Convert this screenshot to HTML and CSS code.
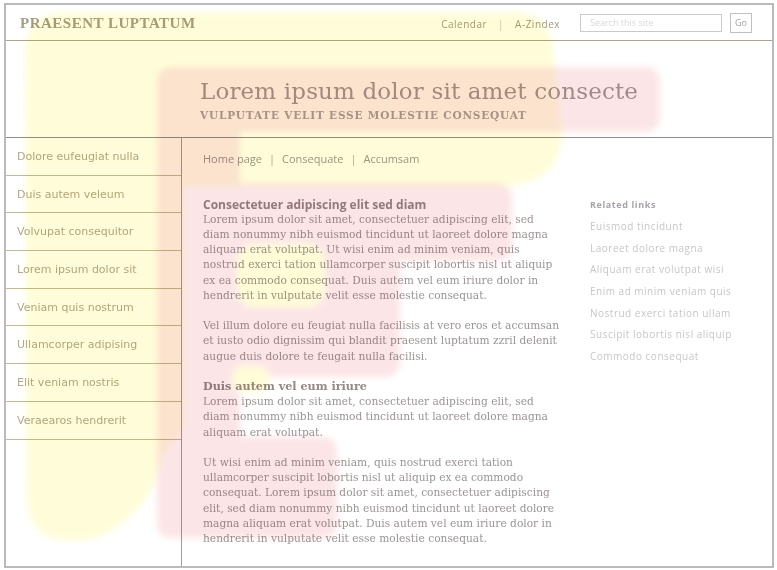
FILE: index.html
```html
<!DOCTYPE html>
<html lang="en">
<head>
<meta charset="utf-8">
<title>Praesent Luptatum</title>
<link rel="stylesheet" href="styles.css">
</head>
<body>
<div class="page">
  <header class="topbar">
    <div class="logo">PRAESENT LUPTATUM</div>
    <nav class="toplinks"><a class="toplink">Calendar</a><span class="sep">|</span><a class="toplink">A-Zindex</a></nav>
    <form class="search">
      <input class="search-input" type="text" placeholder="Search this site">
      <button class="go" type="button">Go</button>
    </form>
  </header>

  <section class="banner">
    <h1 class="title">Lorem ipsum dolor sit amet consecte</h1>
    <p class="subtitle">VULPUTATE VELIT ESSE MOLESTIE CONSEQUAT</p>
  </section>

  <div class="main">
    <ul class="sidenav">
      <li class="navitem">Dolore eufeugiat nulla</li>
      <li class="navitem">Duis autem veleum</li>
      <li class="navitem">Volvupat consequitor</li>
      <li class="navitem">Lorem ipsum dolor sit</li>
      <li class="navitem">Veniam quis nostrum</li>
      <li class="navitem">Ullamcorper adipising</li>
      <li class="navitem">Elit veniam nostris</li>
      <li class="navitem">Veraearos hendrerit</li>
    </ul>

    <div class="content">
      <div class="crumbs">Home page<span class="csep">|</span>Consequate<span class="csep">|</span>Accumsam</div>
      <div class="cols">
        <article class="article">
          <h2 class="art-head">Consectetuer adipiscing elit sed diam</h2>
          <p class="para">Lorem ipsum dolor sit amet, consectetuer adipiscing elit, sed<br>diam nonummy nibh euismod tincidunt ut laoreet dolore magna<br>aliquam erat volutpat. Ut wisi enim ad minim veniam, quis<br>nostrud exerci tation ullamcorper suscipit lobortis nisl ut aliquip<br>ex ea commodo consequat. Duis autem vel eum iriure dolor in<br>hendrerit in vulputate velit esse molestie consequat.</p>
          <p class="para">Vel illum dolore eu feugiat nulla facilisis at vero eros et accumsan<br>et iusto odio dignissim qui blandit praesent luptatum zzril delenit<br>augue duis dolore te feugait nulla facilisi.</p>
          <h3 class="art-sub">Duis autem vel eum iriure</h3>
          <p class="para">Lorem ipsum dolor sit amet, consectetuer adipiscing elit, sed<br>diam nonummy nibh euismod tincidunt ut laoreet dolore magna<br>aliquam erat volutpat.</p>
          <p class="para">Ut wisi enim ad minim veniam, quis nostrud exerci tation<br>ullamcorper suscipit lobortis nisl ut aliquip ex ea commodo<br>consequat. Lorem ipsum dolor sit amet, consectetuer adipiscing<br>elit, sed diam nonummy nibh euismod tincidunt ut laoreet dolore<br>magna aliquam erat volutpat. Duis autem vel eum iriure dolor in<br>hendrerit in vulputate velit esse molestie consequat.</p>
        </article>
        <aside class="related">
          <h4 class="rel-head">Related links</h4>
          <ul class="rel-list">
            <li class="rel-item">Euismod tincidunt</li>
            <li class="rel-item">Laoreet dolore magna</li>
            <li class="rel-item">Aliquam erat volutpat wisi</li>
            <li class="rel-item">Enim ad minim veniam quis</li>
            <li class="rel-item">Nostrud exerci tation ullam</li>
            <li class="rel-item">Suscipit lobortis nisl aliquip</li>
            <li class="rel-item">Commodo consequat</li>
          </ul>
        </aside>
      </div>
    </div>
  </div>
</div>

<svg class="heat" width="777" height="570" viewBox="0 0 777 570" aria-hidden="true">
  <defs>
    <filter id="soft" x="-10%" y="-10%" width="120%" height="120%">
      <feGaussianBlur stdDeviation="3"/>
    </filter>
  </defs>
  <g filter="url(#soft)">
    <path fill="#fffdd9" d="M25 55 Q25 12 68 12 L512 12 Q550 12 553 50 L562 132 Q562 186 498 186 L184 186 L184 420 C184 440 160 448 158 470 C155 500 112 540 82 540 L66 540 C36 540 27 520 26 490 Z"/>
    <g opacity="0.36" fill="#f6b8bc">
      <rect x="157" y="67" width="503" height="65" rx="14"/>
      <rect x="157" y="67" width="83" height="471" rx="14"/>
      <rect x="157" y="183" width="355" height="78" rx="14"/>
      <rect x="157" y="240" width="243" height="137" rx="14"/>
      <rect x="157" y="437" width="180" height="101" rx="14"/>
    </g>
    <rect fill="#fffcd8" x="237" y="244" width="88" height="63" rx="18"/>
    <rect fill="#fffcd8" x="233" y="366" width="36" height="26" rx="10"/>
  </g>
</svg>
</body>
</html>
```

FILE: styles.css
```css
* { box-sizing: border-box; }

html, body {
  margin: 0;
  padding: 0;
  background: #ffffff;
}

body {
  position: relative;
  width: 777px;
  height: 570px;
  overflow: hidden;
  font-family: "Open Sans", "DejaVu Sans", sans-serif;
}

.page {
  width: 770px;
  height: 565px;
  margin: 3px 0 0 4px;
  border: 2px solid #bababa;
  display: flex;
  flex-direction: column;
  background: #fff;
}

/* ---------- top bar ---------- */
.topbar {
  height: 36px;
  flex: none;
  border-bottom: 1px solid #aca58e;
  display: flex;
  align-items: center;
  padding: 0 20px 0 14px;
}

.logo {
  font-family: "Liberation Serif", serif;
  font-weight: bold;
  font-size: 15px;
  letter-spacing: 0.5px;
  color: #a59d87;
  margin-top: 1px;
}

.toplinks {
  margin-left: auto;
  display: flex;
  align-items: center;
  font-size: 10px;
  letter-spacing: 0.5px;
  color: #a09a82;
  margin-top: 2px;
}

.toplink { color: inherit; }

.sep {
  margin: 0 11px;
  color: #c4bfae;
}

.search {
  display: flex;
  align-items: center;
  margin: 0 0 0 20px;
}

.search-input {
  width: 142px;
  height: 18px;
  border: 1px solid #cacaca;
  padding: 0 0 0 9px;
  font-family: "Open Sans", sans-serif;
  font-size: 9px;
  color: #999;
  outline: none;
}

.search-input::placeholder { color: #d9d9d9; }

.go {
  width: 22px;
  height: 20px;
  margin-left: 8px;
  border: 1px solid #c0c0c0;
  background: #fff;
  padding: 0;
  font-family: "Open Sans", sans-serif;
  font-size: 9px;
  color: #a0a0a0;
}

/* ---------- banner ---------- */
.banner {
  height: 97px;
  flex: none;
  border-bottom: 1px solid #8f8f8f;
  padding: 36px 0 0 194px;
}

.title {
  margin: 0;
  font-family: "DejaVu Serif", serif;
  font-weight: normal;
  font-size: 23px;
  line-height: 28px;
  letter-spacing: 0.15px;
  color: #a49a9a;
  white-space: nowrap;
}

.subtitle {
  margin: 3px 0 0;
  font-family: "DejaVu Serif", serif;
  font-weight: bold;
  font-size: 10.5px;
  line-height: 14px;
  letter-spacing: 0.82px;
  color: #aaa4a4;
  white-space: nowrap;
}

/* ---------- main area ---------- */
.main {
  flex: 1;
  display: flex;
  min-height: 0;
}

.sidenav {
  list-style: none;
  margin: 0;
  padding: 0;
  width: 176px;
  flex: none;
  border-right: 1px solid #a39f90;
}

.navitem {
  height: 37.7px;
  display: flex;
  align-items: center;
  padding-left: 11px;
  border-bottom: 1px solid #c3ba9a;
  font-family: "DejaVu Sans", sans-serif;
  font-size: 11px;
  color: #b0a890;
  white-space: nowrap;
}

.content {
  flex: 1;
  padding: 12.5px 0 0 21px;
}

.crumbs {
  font-size: 11px;
  line-height: 15px;
  color: #9c9593;
}

.csep {
  margin: 0 7px;
  color: #b0a8a6;
}

.cols {
  margin-top: 31px;
  display: grid;
  grid-template-columns: 366px 1fr;
  column-gap: 21px;
}

.article {
  font-family: "DejaVu Serif", serif;
  font-size: 10.65px;
  line-height: 15.2px;
  color: #9c9494;
}

.art-head {
  margin: 0;
  font-family: "Open Sans", sans-serif;
  font-weight: bold;
  font-size: 12px;
  line-height: 15.2px;
  color: #948888;
}

.art-sub {
  margin: 0;
  font-family: "DejaVu Serif", serif;
  font-weight: bold;
  font-size: 11.2px;
  line-height: 15.2px;
  color: #948888;
}

.para {
  margin: 0 0 15.2px;
  white-space: nowrap;
}

.related {
  padding-top: 0;
}

.rel-head {
  margin: 0;
  font-size: 9px;
  line-height: 15.2px;
  font-weight: bold;
  letter-spacing: 0.6px;
  color: #aaa2ac;
}

.rel-list {
  list-style: none;
  margin: 4.6px 0 0;
  padding: 0;
}

.rel-item {
  height: 21.6px;
  line-height: 21.6px;
  font-size: 10px;
  letter-spacing: 0.5px;
  color: #c6c6c6;
  white-space: nowrap;
}

/* ---------- heat overlay ---------- */
.heat {
  position: absolute;
  top: 0;
  left: 0;
  pointer-events: none;
  mix-blend-mode: multiply;
}
```
